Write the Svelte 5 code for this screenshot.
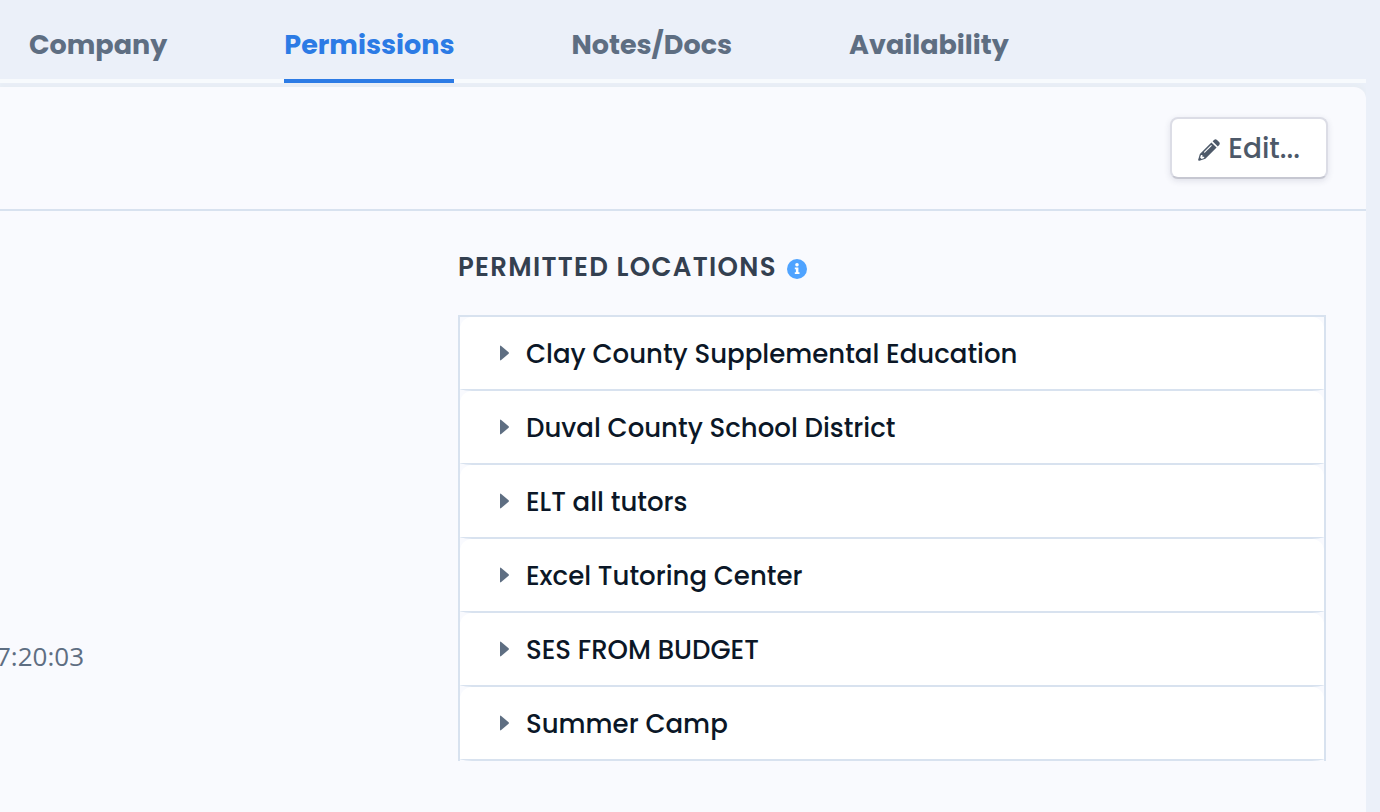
<script>
  const tabs = ['Company', 'Permissions', 'Notes/Docs', 'Availability'];

  const locations = [
    'Clay County Supplemental Education',
    'Duval County School District',
    'ELT all tutors',
    'Excel Tutoring Center',
    'SES FROM BUDGET',
    'Summer Camp'
  ];

  let activeTab = $state('Permissions');
  let expanded = $state({});
</script>

<div class="page">
  <nav class="tabs">
    {#each tabs as tab}
      <button
        class="tab"
        class:active={tab === activeTab}
        aria-current={tab === activeTab ? 'page' : undefined}
        onclick={() => (activeTab = tab)}
      >
        {tab}
      </button>
    {/each}
  </nav>

  <main class="panel">
    <header class="panel-header">
      <button class="edit-btn">
        <svg width="22" height="22" viewBox="0 0 22 22" aria-hidden="true">
          <path d="M13.4 3.4 18.6 8.6 7.4 19.8 1.4 21.8Q0 22 .2 20.6L1.9 14.9Z" fill="currentColor" />
          <path d="M14.6 2.2 16 .9Q17.5-.3 19 .9L21.1 3Q22.4 4.4 21.2 5.9L19.8 7.4Z" fill="currentColor" />
          <path d="M6.6 13.2 13.2 6.6" stroke="#fff" stroke-width="1.1" stroke-linecap="round" />
          <path d="M3 16H4.4V17.8H6.2V19L3.6 19.9 2.1 18.4Z" fill="#fff" />
        </svg>
        <span>Edit...</span>
      </button>
    </header>

    <div class="panel-body">
      <aside class="details">
        <time class="timestamp">7:20:03</time>
      </aside>

      <section class="locations">
        <h2>
          Permitted Locations
          <svg class="info" width="20" height="20" viewBox="0 0 20 20" role="img" aria-label="Info">
            <circle cx="10" cy="10" r="10" fill="#4fa3ff" />
            <circle cx="10" cy="5.8" r="1.8" fill="#fff" />
            <path d="M7.8 8.5H11.4V13.3H12.5V15.1H7.8V13.3H8.9V10.3H7.8Z" fill="#fff" />
          </svg>
        </h2>
        <ul>
          {#each locations as name}
            <li>
              <button
                class="location"
                aria-expanded={!!expanded[name]}
                onclick={() => (expanded[name] = !expanded[name])}
              >
                <svg class="caret" width="10" height="16" viewBox="0 0 10 16" aria-hidden="true">
                  <path d="M0 1.2Q0 0 1.2.9L8.6 7.2Q9.4 8 8.6 8.8L1.2 15.1Q0 16 0 14.8Z" fill="currentColor" />
                </svg>
                {name}
              </button>
            </li>
          {/each}
        </ul>
      </section>
    </div>
  </main>
</div>

<style>
  :global(body) {
    margin: 0;
    background: #ebf0f9;
  }

  .page {
    display: flex;
    flex-direction: column;
    min-height: 100vh;
    box-sizing: border-box;
    padding-right: 14px;
    font-family: Poppins, Inter, sans-serif;
    color: #0b1727;
  }

  button {
    font-family: inherit;
    cursor: pointer;
  }

  .tabs {
    display: flex;
    gap: 117px;
    padding-left: 29px;
    margin-bottom: 4px;
    box-shadow: inset 0 -4px #f7fafd;
  }

  .tab {
    padding: 25px 0 14px;
    border: 0;
    border-bottom: 4px solid transparent;
    background: none;
    color: #5e6e82;
    font-size: 27px;
    font-weight: 700;
    line-height: 40px;
  }

  .tab.active {
    color: #2c7be5;
    border-bottom-color: #2c7be5;
  }

  .panel {
    flex: 1;
    background: #f9fafe;
    border-radius: 0 12px 0 0;
    box-shadow: 0 -4px 4px #e7edf4;
    clip-path: inset(-4px 0 0 0);
  }

  .panel-header {
    display: flex;
    justify-content: flex-end;
    padding: 30px 38px;
    border-bottom: 2px solid #d8e2ef;
  }

  .edit-btn {
    display: flex;
    align-items: center;
    gap: 8px;
    padding: 11px 26px 9px;
    border: 2px solid #dcdde6;
    border-bottom-color: #c6c7d1;
    border-radius: 8px;
    background: #fff;
    box-shadow: 0 2px 6px rgba(43, 45, 80, 0.12);
    color: #4d5969;
    font-size: 28px;
    font-weight: 500;
    line-height: 38px;
  }

  .edit-btn svg {
    margin-top: 2px;
  }

  .panel-body {
    display: flex;
    padding: 36px 40px 50px 0;
  }

  .details {
    flex: 0 0 458px;
    padding-top: 391px;
  }

  .timestamp {
    display: flex;
    justify-content: flex-end;
    width: 84px;
    overflow: hidden;
    color: #5e6e82;
    font-family: "Open Sans", "Noto Sans", sans-serif;
    font-size: 26px;
    line-height: 36px;
  }

  .locations {
    flex: 1;
    min-width: 0;
  }

  h2 {
    display: flex;
    align-items: center;
    gap: 10px;
    margin: 0 0 28px;
    color: #344050;
    font-size: 26px;
    font-weight: 600;
    line-height: 40px;
    letter-spacing: 0.05em;
    text-transform: uppercase;
  }

  .info {
    margin-top: 4px;
  }

  ul {
    margin: 0;
    padding: 0;
    list-style: none;
    border: 2px solid #d8e2ef;
    border-bottom: 0;
  }

  .location {
    display: flex;
    align-items: center;
    gap: 16px;
    width: 100%;
    padding: 17px 40px 15px;
    border: 0;
    border-bottom: 2px solid #d8e2ef;
    border-radius: 12px 12px 20px 20px / 12px 12px 2px 2px;
    background: #fff;
    color: #0b1727;
    font-size: 26px;
    font-weight: 500;
    line-height: 40px;
    text-align: left;
  }

  .caret {
    margin-bottom: 2px;
    color: #5e6e82;
  }

  .location[aria-expanded="true"] .caret {
    transform: rotate(90deg);
  }
</style>
